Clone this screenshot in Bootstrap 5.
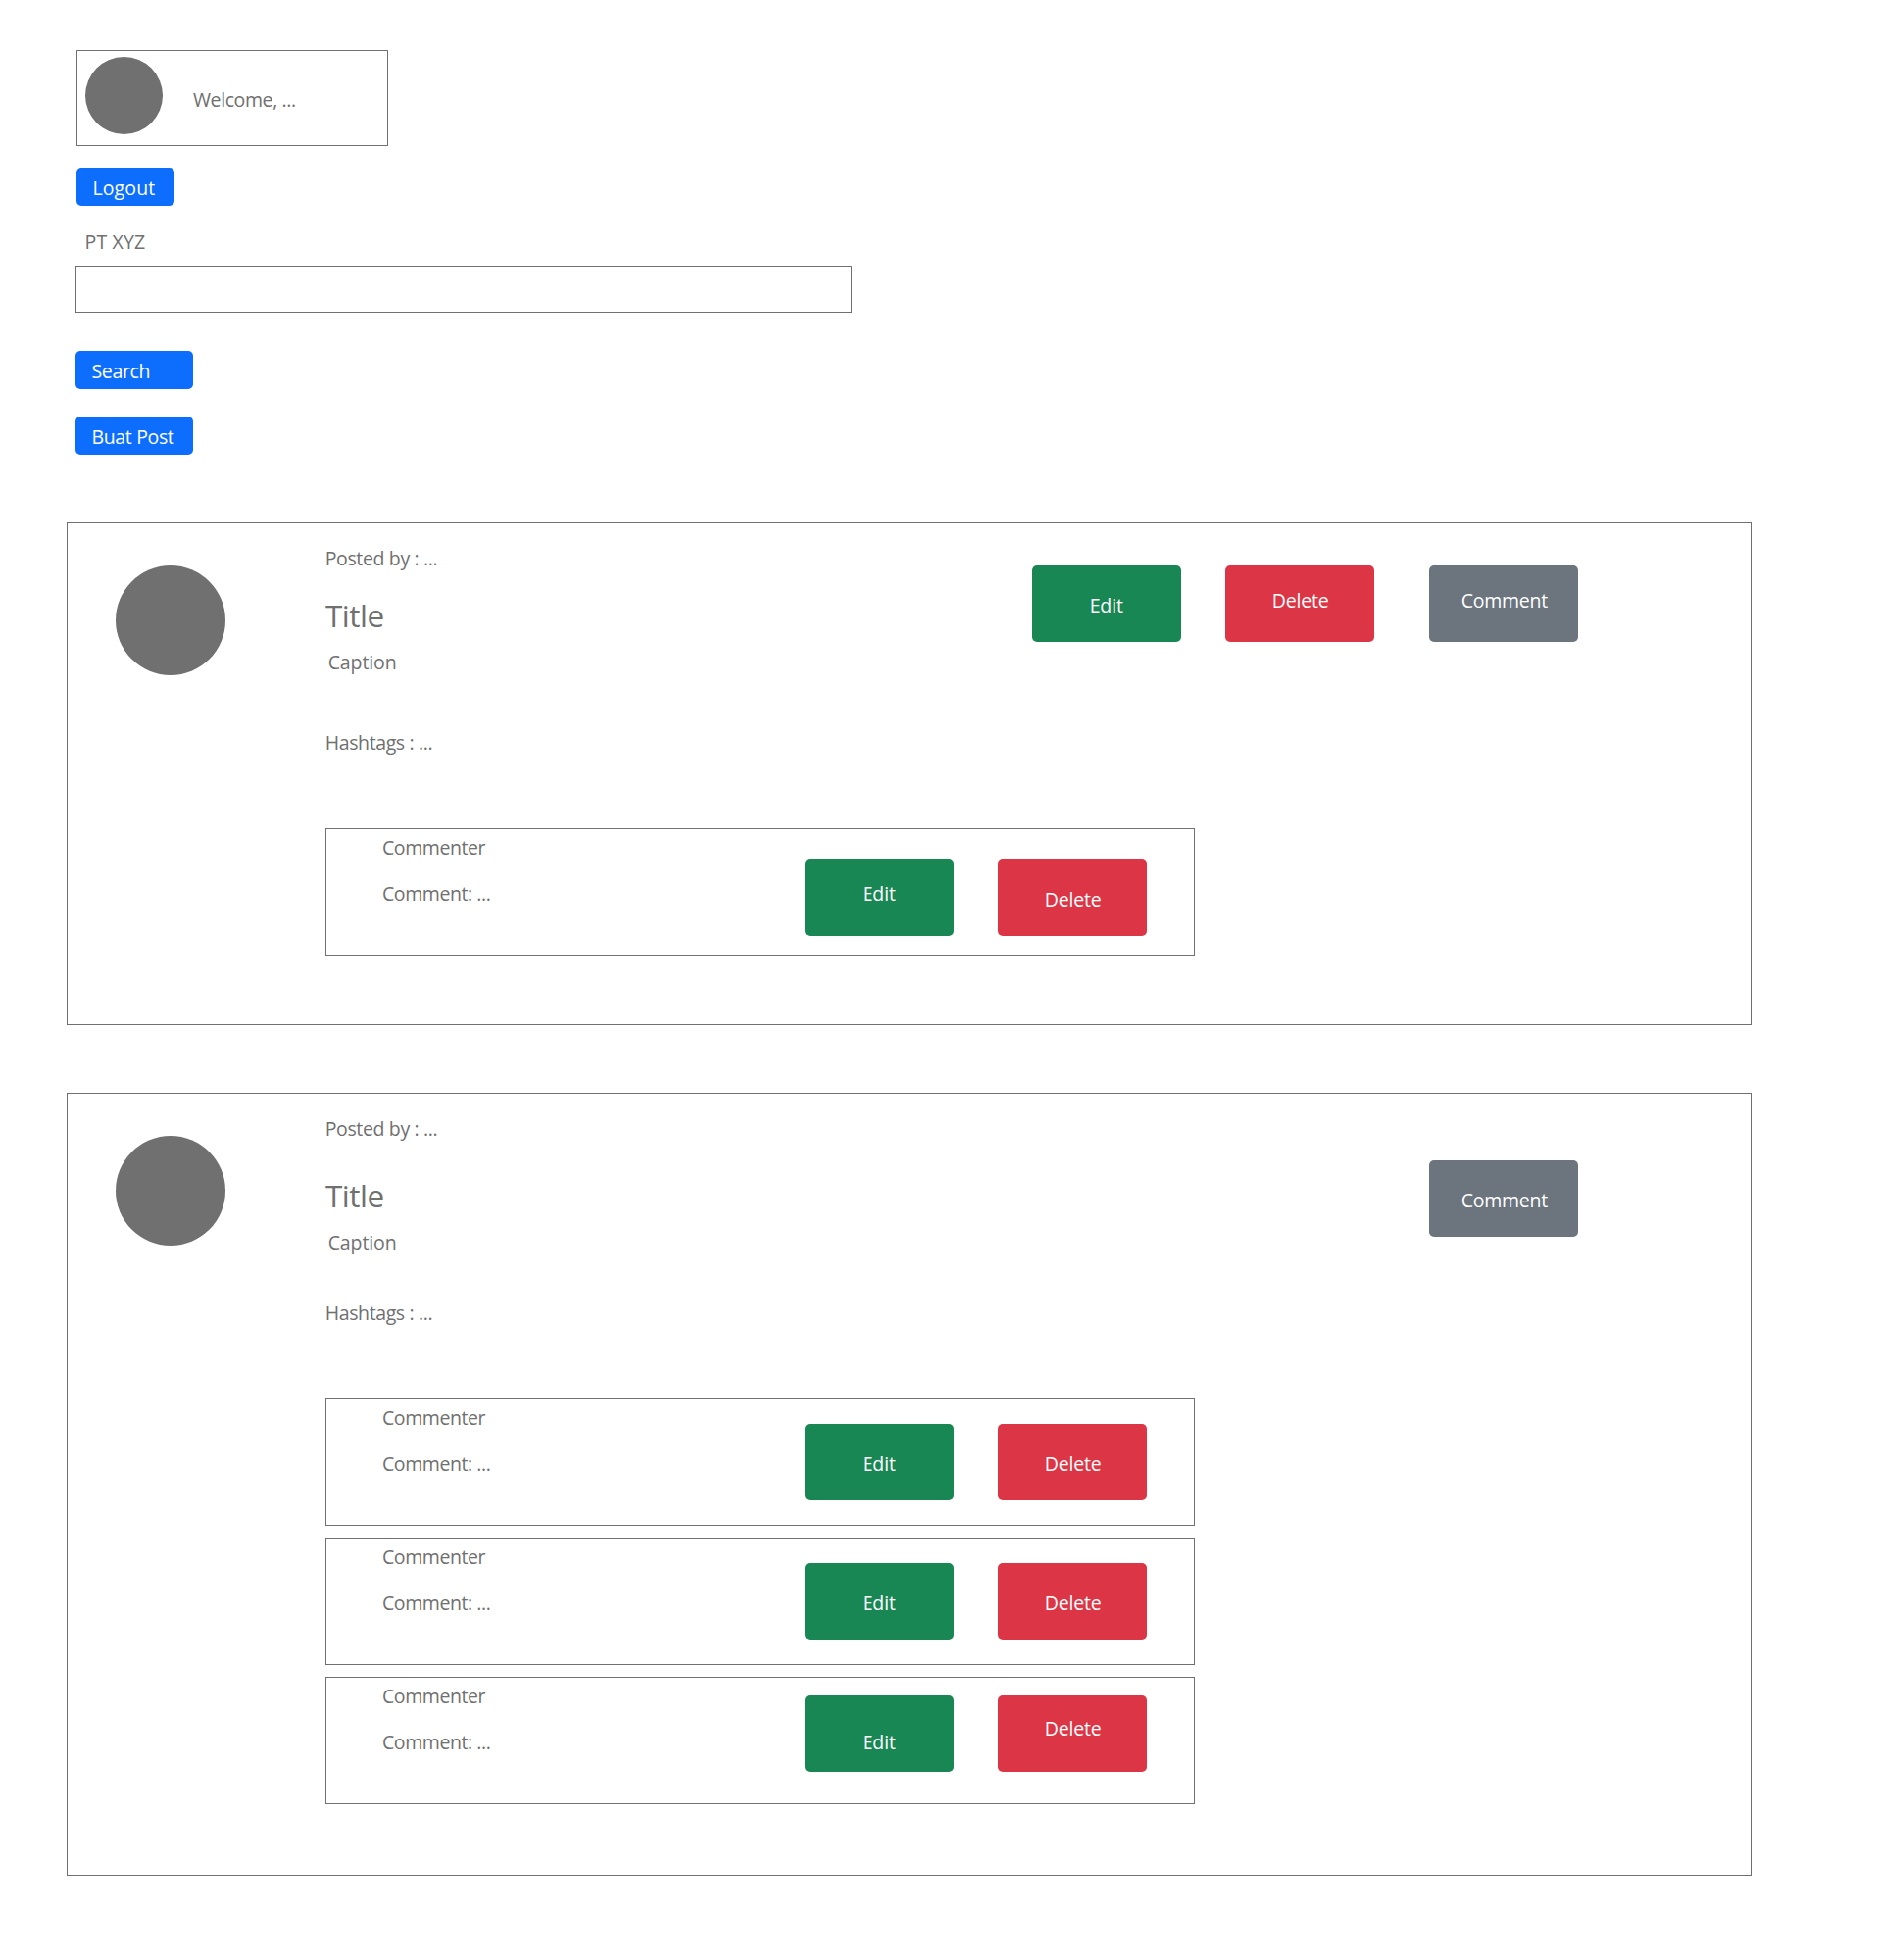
<!DOCTYPE html>
<html lang="id">
<head>
<meta charset="utf-8">
<meta name="viewport" content="width=device-width, initial-scale=1">
<title>PT XYZ</title>
<link href="https://cdn.jsdelivr.net/npm/bootstrap@5.3.0/dist/css/bootstrap.min.css" rel="stylesheet">
<style>
body{font-family:"Open Sans","Noto Sans",sans-serif;font-size:19.5px;line-height:28px;color:#707070;background:#fff;min-height:2000px}
.frame{border:1px solid #707070}
.dot{background:#707070;border-radius:50%;flex:none}
.topbar{padding:51px 0 0 77px}
.user-box{width:318px;height:98px;margin-left:1px;padding:6px 0 0 8px}
.user-box .dot{width:79px;height:79px}
.user-box span{margin:30px 0 0 31px;letter-spacing:-.4px}
.btn{display:flex;align-items:flex-start;justify-content:flex-start;font-size:19.5px;line-height:28px;border:0;border-radius:5px;white-space:nowrap}
.btn-nav{width:120px;height:39px;padding:7px 0 0 16.5px;letter-spacing:-.35px}
.btn-out{width:100px;margin:22px 0 0 1px;letter-spacing:.1px}
.btn-search{margin-top:39px}
.btn-create{margin-top:28px}
.brand{margin:23px 0 0 9.5px;letter-spacing:.15px}
.form-control.search-box{width:792px;height:48px;margin-top:10px;border:1px solid #707070;border-radius:0}
.post{width:1719px;margin-left:68px;padding-left:49px;margin-top:69px}
.post>.dot{width:112px;height:112px;margin-top:43px}
.post-main{margin-left:101px;width:888px}
.post-head{height:267px}
.post-one{height:513px}
.post-two{height:799px}
.post-by{padding:22px 0 0 .7px;letter-spacing:-.36px}
.post-title{font-size:31.5px;line-height:40px;font-weight:400;margin:24px 0 0 1px;letter-spacing:-.5px}
.post-two .post-title{margin-top:34px}
.post-cap{margin:14px 0 0 3.7px;letter-spacing:-.1px}
.post-tags{margin:54px 0 0 .7px;letter-spacing:-.38px}
.post-two .post-tags{margin-top:44px}
.btn-act{width:152px;height:78px;padding:27px 0 0;flex:none;letter-spacing:-.15px}
.act-edit{padding-left:58.7px}
.act-del{padding-left:47.7px}
.act-com{padding-left:32.7px;letter-spacing:-.25px}
.post-one .tools{margin:43px 0 0 -166px}
.post-two .tools{margin:68px 0 0 239px}
.post-one .tools .act-del{margin-left:45px}
.post-one .tools .act-com{margin-left:56px}
.comments{padding:44px 0 0 1px;gap:12px}
.cmt{width:887px;height:130px;padding-left:57px}
.cmt-text{width:431px;padding-top:5px;letter-spacing:-.43px}
.cmt-text p+p{margin-top:19px}
.cmt-tools{gap:45px;padding-top:25px}
.post-one .cmt-tools{padding-top:31px}
.cmt-last .cmt-tools{padding-top:18px}
.up-1{padding-top:22px}.up-2{padding-top:21px}.up-3{padding-top:20px}.down-1{padding-top:34px}
</style>
</head>
<body>
<header class="topbar d-flex flex-column align-items-start">
  <div class="frame user-box d-flex align-items-start"><div class="dot"></div><span>Welcome, ...</span></div>
  <button class="btn btn-primary btn-nav btn-out">Logout</button>
  <div class="brand">PT XYZ</div>
  <input class="form-control search-box" type="text" aria-label="Search">
  <button class="btn btn-primary btn-nav btn-search">Search</button>
  <button class="btn btn-primary btn-nav btn-create">Buat Post</button>
</header>
<main>
  <article class="post post-one frame d-flex align-items-start">
    <div class="dot"></div>
    <div class="post-main">
      <div class="post-head">
        <p class="post-by mb-0">Posted by : ...</p>
        <h2 class="post-title mb-0">Title</h2>
        <p class="post-cap mb-0">Caption</p>
        <p class="post-tags mb-0">Hashtags : ...</p>
      </div>
      <div class="comments d-flex flex-column">
        <div class="cmt frame d-flex align-items-start">
          <div class="cmt-text"><p class="mb-0">Commenter</p><p class="mb-0">Comment: ...</p></div>
          <div class="cmt-tools d-flex"><button class="btn btn-success btn-act act-edit up-2">Edit</button><button class="btn btn-danger btn-act act-del">Delete</button></div>
        </div>
      </div>
    </div>
    <div class="tools d-flex">
      <button class="btn btn-success btn-act act-edit">Edit</button>
      <button class="btn btn-danger btn-act act-del up-1">Delete</button>
      <button class="btn btn-secondary btn-act act-com up-1">Comment</button>
    </div>
  </article>
  <article class="post post-two frame d-flex align-items-start">
    <div class="dot"></div>
    <div class="post-main">
      <div class="post-head">
        <p class="post-by mb-0">Posted by : ...</p>
        <h2 class="post-title mb-0">Title</h2>
        <p class="post-cap mb-0">Caption</p>
        <p class="post-tags mb-0">Hashtags : ...</p>
      </div>
      <div class="comments d-flex flex-column">
        <div class="cmt frame d-flex align-items-start">
          <div class="cmt-text"><p class="mb-0">Commenter</p><p class="mb-0">Comment: ...</p></div>
          <div class="cmt-tools d-flex"><button class="btn btn-success btn-act act-edit">Edit</button><button class="btn btn-danger btn-act act-del">Delete</button></div>
        </div>
        <div class="cmt frame d-flex align-items-start">
          <div class="cmt-text"><p class="mb-0">Commenter</p><p class="mb-0">Comment: ...</p></div>
          <div class="cmt-tools d-flex"><button class="btn btn-success btn-act act-edit">Edit</button><button class="btn btn-danger btn-act act-del">Delete</button></div>
        </div>
        <div class="cmt cmt-last frame d-flex align-items-start">
          <div class="cmt-text"><p class="mb-0">Commenter</p><p class="mb-0">Comment: ...</p></div>
          <div class="cmt-tools d-flex"><button class="btn btn-success btn-act act-edit down-1">Edit</button><button class="btn btn-danger btn-act act-del up-3">Delete</button></div>
        </div>
      </div>
    </div>
    <div class="tools d-flex"><button class="btn btn-secondary btn-act act-com">Comment</button></div>
  </article>
</main>
<script src="https://cdn.jsdelivr.net/npm/bootstrap@5.3.0/dist/js/bootstrap.bundle.min.js"></script>
</body>
</html>
